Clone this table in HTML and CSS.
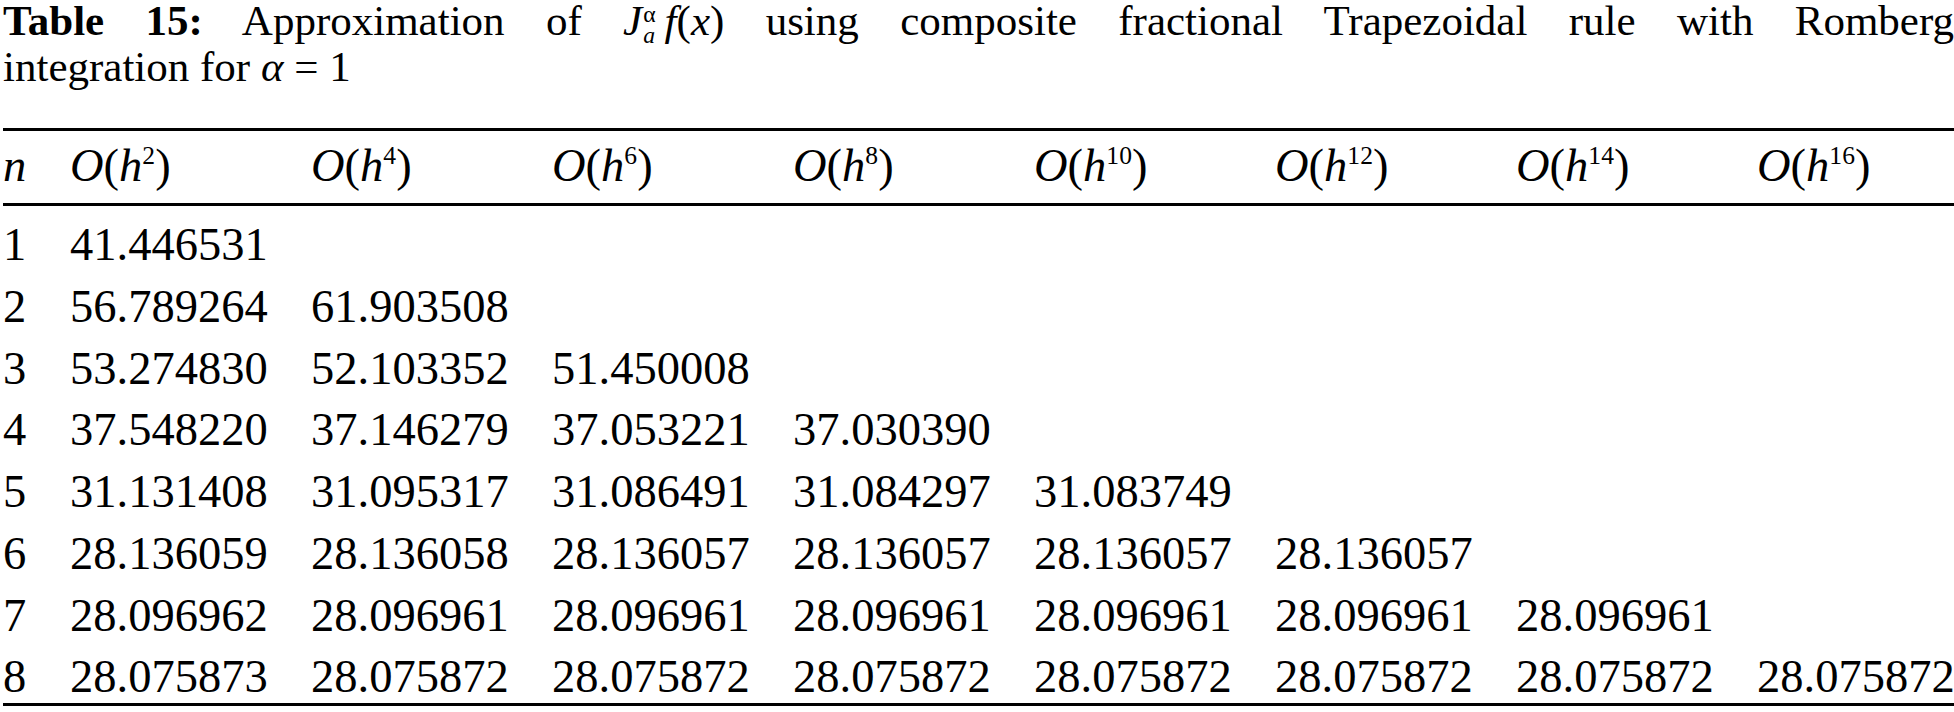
FILE: index.html
```html
<!DOCTYPE html>
<html lang="en">
<head>
    <meta charset="UTF-8">
    <meta name="viewport" content="width=device-width, initial-scale=1.0">
    <link rel="stylesheet" href="styles.css">

    <title>Table 15 - Romberg integration</title>
</head>
<body>

    <div class="page">
        <p class="caption">
            <span class="cap-line first"><b>Table 15:</b> Approximation of <i>J</i><span class="supsub"><span>&alpha;</span><i>a</i></span><i class="fn">f</i>(<i>x</i>) using composite fractional Trapezoidal rule with Romberg</span>
            <span class="cap-line">integration for <i>&alpha;</i> = 1</span>
        </p>

        <table class="romberg">
            <colgroup>
                <col class="col-n">
                <col class="col-o"><col class="col-o"><col class="col-o"><col class="col-o">
                <col class="col-o"><col class="col-o"><col class="col-o">
                <col>
            </colgroup>
            <thead>
                <tr>
                    <th><i>n</i></th>
                    <th><i>O</i>(<i>h</i><sup>2</sup>)</th>
                    <th><i>O</i>(<i>h</i><sup>4</sup>)</th>
                    <th><i>O</i>(<i>h</i><sup>6</sup>)</th>
                    <th><i>O</i>(<i>h</i><sup>8</sup>)</th>
                    <th><i>O</i>(<i>h</i><sup>10</sup>)</th>
                    <th><i>O</i>(<i>h</i><sup>12</sup>)</th>
                    <th><i>O</i>(<i>h</i><sup>14</sup>)</th>
                    <th><i>O</i>(<i>h</i><sup>16</sup>)</th>
                </tr>
            </thead>
            <tbody>
                <tr><td>1</td><td>41.446531</td><td></td><td></td><td></td><td></td><td></td><td></td><td></td></tr>
                <tr><td>2</td><td>56.789264</td><td>61.903508</td><td></td><td></td><td></td><td></td><td></td><td></td></tr>
                <tr><td>3</td><td>53.274830</td><td>52.103352</td><td>51.450008</td><td></td><td></td><td></td><td></td><td></td></tr>
                <tr><td>4</td><td>37.548220</td><td>37.146279</td><td>37.053221</td><td>37.030390</td><td></td><td></td><td></td><td></td></tr>
                <tr><td>5</td><td>31.131408</td><td>31.095317</td><td>31.086491</td><td>31.084297</td><td>31.083749</td><td></td><td></td><td></td></tr>
                <tr><td>6</td><td>28.136059</td><td>28.136058</td><td>28.136057</td><td>28.136057</td><td>28.136057</td><td>28.136057</td><td></td><td></td></tr>
                <tr><td>7</td><td>28.096962</td><td>28.096961</td><td>28.096961</td><td>28.096961</td><td>28.096961</td><td>28.096961</td><td>28.096961</td><td></td></tr>
                <tr class="last"><td>8</td><td>28.075873</td><td>28.075872</td><td>28.075872</td><td>28.075872</td><td>28.075872</td><td>28.075872</td><td>28.075872</td><td>28.075872</td></tr>
            </tbody>
        </table>
    </div>

</body>
</html>
```

FILE: styles.css
```css
body {
    font-family: 'Liberation Serif', 'Times New Roman', serif;
    margin: 0;
    padding: 0;
    background-color: #fff;
    color: #000;
}

.page {
    padding-left: 3px;
}

.caption {
    margin: 0;
    font-size: 43px;
    line-height: 42px;
}

.cap-line {
    display: block;
}

.cap-line.first {
    text-align: justify;
    text-align-last: justify;
}

.supsub {
    display: inline-flex;
    flex-direction: column;
    font-size: 0.55em;
    line-height: 0.9;
    vertical-align: middle;
    margin: 0 0 0 1px;
}

.fn {
    display: inline-block;
    padding-left: 9px;
}

.romberg {
    width: 100%;
    table-layout: fixed;
    border-collapse: separate;
    border-spacing: 0;
    margin-top: 40px;
    font-size: 46.5px;
}

.col-n {
    width: 67px;
}

.col-o {
    width: 241px;
}

.romberg th,
.romberg td {
    padding: 0;
    text-align: left;
    font-weight: normal;
    white-space: nowrap;
}

.romberg th {
    line-height: 47px;
    padding-top: 11px;
    padding-bottom: 14px;
    border-top: 3px solid #000;
    border-bottom: 3px solid #000;
}

.romberg sup {
    font-size: 0.55em;
    line-height: 0;
    vertical-align: 0.65em;
}

.romberg td {
    line-height: 40px;
    padding-top: 19px;
    padding-bottom: 2.7px;
}

.romberg .last td {
    padding-bottom: 6px;
    border-bottom: 3px solid #000;
}
```
